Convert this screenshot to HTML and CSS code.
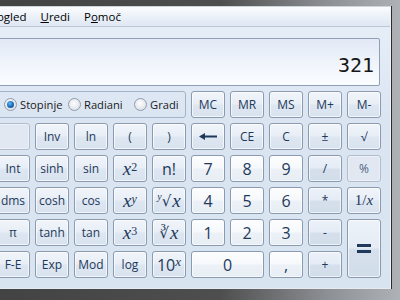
FILE: index.html
```html
<!DOCTYPE html>
<html lang="sl">

<head>
    <meta charset="UTF-8">
    <meta name="viewport" content="width=device-width, initial-scale=1.0">
    <title>Kalkulator</title>
    <link rel="stylesheet" href="styles.css">
</head>

<body>

    <div class="window">
        <div class="menubar">
            <span class="menu-item">Pogled</span>
            <span class="menu-item"><u>U</u>redi</span>
            <span class="menu-item">P<u>o</u>moč</span>
        </div>

        <div class="client">
            <div class="display">321</div>

            <div class="keypad">
                <div class="modes">
                    <label class="mode"><span class="radio checked"></span>Stopinje</label>
                    <label class="mode"><span class="radio"></span>Radiani</label>
                    <label class="mode"><span class="radio"></span>Gradi</label>
                </div>
                <button class="key">MC</button>
                <button class="key">MR</button>
                <button class="key">MS</button>
                <button class="key">M+</button>
                <button class="key">M-</button>

                <button class="key off"></button>
                <button class="key">Inv</button>
                <button class="key">ln</button>
                <button class="key">(</button>
                <button class="key">)</button>
                <button class="key">
                    <svg width="18" height="9" viewBox="0 0 18 9"><polygon points="0,4.5 6,1 6,8" fill="#1e395b"/><rect x="5" y="3.5" width="13" height="2" fill="#1e395b"/></svg>
                </button>
                <button class="key">CE</button>
                <button class="key">C</button>
                <button class="key">±</button>
                <button class="key">√</button>

                <button class="key">Int</button>
                <button class="key">sinh</button>
                <button class="key">sin</button>
                <button class="key math"><i>x</i><sup>2</sup></button>
                <button class="key big">n!</button>
                <button class="key num">7</button>
                <button class="key num">8</button>
                <button class="key num">9</button>
                <button class="key op">/</button>
                <button class="key off">%</button>

                <button class="key">dms</button>
                <button class="key">cosh</button>
                <button class="key">cos</button>
                <button class="key math"><i>x</i><sup><i>y</i></sup></button>
                <button class="key math"><sup class="idx"><i>y</i></sup><span class="rad">√</span><i>x</i></button>
                <button class="key num">4</button>
                <button class="key num">5</button>
                <button class="key num">6</button>
                <button class="key op">*</button>
                <button class="key small-math">1/<i>x</i></button>

                <button class="key">π</button>
                <button class="key">tanh</button>
                <button class="key">tan</button>
                <button class="key math"><i>x</i><sup>3</sup></button>
                <button class="key math"><span class="rad">∛</span><i>x</i></button>
                <button class="key num">1</button>
                <button class="key num">2</button>
                <button class="key num">3</button>
                <button class="key op">-</button>
                <button class="key op equals">
                    <svg width="14" height="9" viewBox="0 0 14 9"><rect x="0" y="0" width="14" height="3" fill="#1e395b"/><rect x="0" y="6" width="14" height="3" fill="#1e395b"/></svg>
                </button>

                <button class="key">F-E</button>
                <button class="key">Exp</button>
                <button class="key">Mod</button>
                <button class="key">log</button>
                <button class="key big">10<sup><i>x</i></sup></button>
                <button class="key num zero">0</button>
                <button class="key num">,</button>
                <button class="key op">+</button>
            </div>
        </div>
    </div>

</body>

</html>
```

FILE: styles.css
```css
body {
    margin: 0;
    padding-top: 6px;
    height: 294px;
    overflow: hidden;
    background: linear-gradient(to right, #434343 0%, #4e4e4e 55%, #8d9095 82%, #aeb2b7 100%);
    font-family: "Open Sans", "Noto Sans", sans-serif;
}

.window {
    width: 405px;
    margin-left: -14px;
    box-sizing: border-box;
    background: linear-gradient(#e8eff8, #dbe5f2 110px, #d9e4f1);
    border-top: 1px solid #cfd5dc;
    border-right: 1px solid #eef2f6;
    border-bottom: 1px solid #e6ebf1;
    box-shadow: 1px 0 0 #2c2c2c;
}

.menubar {
    display: flex;
    gap: 14px;
    height: 19px;
    padding-left: 4px;
    line-height: 19px;
    font-size: 11.5px;
    color: #000;
    background: linear-gradient(#fbfcfe, #eaf0f8 55%, #dfe7f2);
    border-bottom: 1px solid #bdc9d8;
}

.client {
    padding: 11px 10px 10px;
}

.display {
    height: 48px;
    border: 1px solid #8e9fb6;
    border-radius: 2px;
    background: linear-gradient(#e1e9f5, #f2f6fc 60%, #fbfdff);
    display: flex;
    align-items: flex-end;
    justify-content: flex-end;
    padding: 0 5px 9px;
    box-sizing: border-box;
    font-family: "DejaVu Sans Mono", "Liberation Mono", monospace;
    font-size: 20px;
    line-height: 22px;
    color: #161616;
}

.keypad {
    margin-top: 5px;
    display: grid;
    grid-template-columns: repeat(10, 34px);
    grid-auto-rows: 27px;
    gap: 5px;
}

.modes {
    grid-column: span 5;
    display: grid;
    grid-template-columns: 64px 66px auto;
    align-items: center;
    padding-left: 7px;
    border: 1px solid #a4b3c7;
    border-radius: 3px;
    font-size: 11.2px;
    color: #1a1a1a;
}

.mode {
    display: flex;
    align-items: center;
    gap: 3px;
}

.radio {
    flex: none;
    width: 11px;
    height: 11px;
    border: 1px solid #8e9db0;
    border-radius: 50%;
    background: radial-gradient(circle at 45% 40%, #fdfdfd, #d3d9e0);
    position: relative;
}

.radio.checked::after {
    content: "";
    position: absolute;
    left: 2px;
    top: 2px;
    width: 7px;
    height: 7px;
    border-radius: 50%;
    background: radial-gradient(circle at 40% 35%, #5fb7f5, #1262b3 60%, #0b3f80);
}

.key {
    padding: 0;
    display: flex;
    align-items: center;
    justify-content: center;
    font-family: "Open Sans", "Noto Sans", sans-serif;
    font-size: 12px;
    color: #1e395b;
    border: 1px solid #8a9bb1;
    border-radius: 3px;
    background: linear-gradient(#f1f5fa, #e8eef6 48%, #dde6f1 52%, #d9e3ef);
    box-shadow: inset 0 0 0 1px rgba(255, 255, 255, 0.65);
}

.num {
    font-size: 16px;
    background: linear-gradient(#fcfdfe, #f6f8fb 48%, #ecf1f7 52%, #e8eef5);
}

.op {
    background: linear-gradient(#edf2f9, #e5ecf5 48%, #d6e0ec 52%, #d2ddea);
}

.off {
    color: #4d6483;
    border-color: #aebccd;
    background: #e1e8f2;
    box-shadow: inset 0 0 0 1px rgba(255, 255, 255, 0.4);
}

.equals {
    grid-row: span 2;
}

.zero {
    grid-column: span 2;
}

.math {
    font-family: "Liberation Serif", "DejaVu Serif", serif;
    font-size: 19px;
}

.math sup {
    font-size: 12px;
    position: relative;
    top: -2px;
    vertical-align: super;
    line-height: 0;
}

.math .idx {
    font-size: 10px;
    top: -4px;
    margin-right: 0;
}

.rad {
    font-size: 15px;
    font-family: "DejaVu Serif", serif;
    margin-right: 1px;
}

.big {
    font-size: 16px;
}

.big sup {
    font-family: "Liberation Serif", serif;
    font-size: 13px;
    line-height: 0;
    position: relative;
    top: -3px;
}

.small-math {
    font-family: "Liberation Serif", "DejaVu Serif", serif;
    font-size: 15px;
}
```
